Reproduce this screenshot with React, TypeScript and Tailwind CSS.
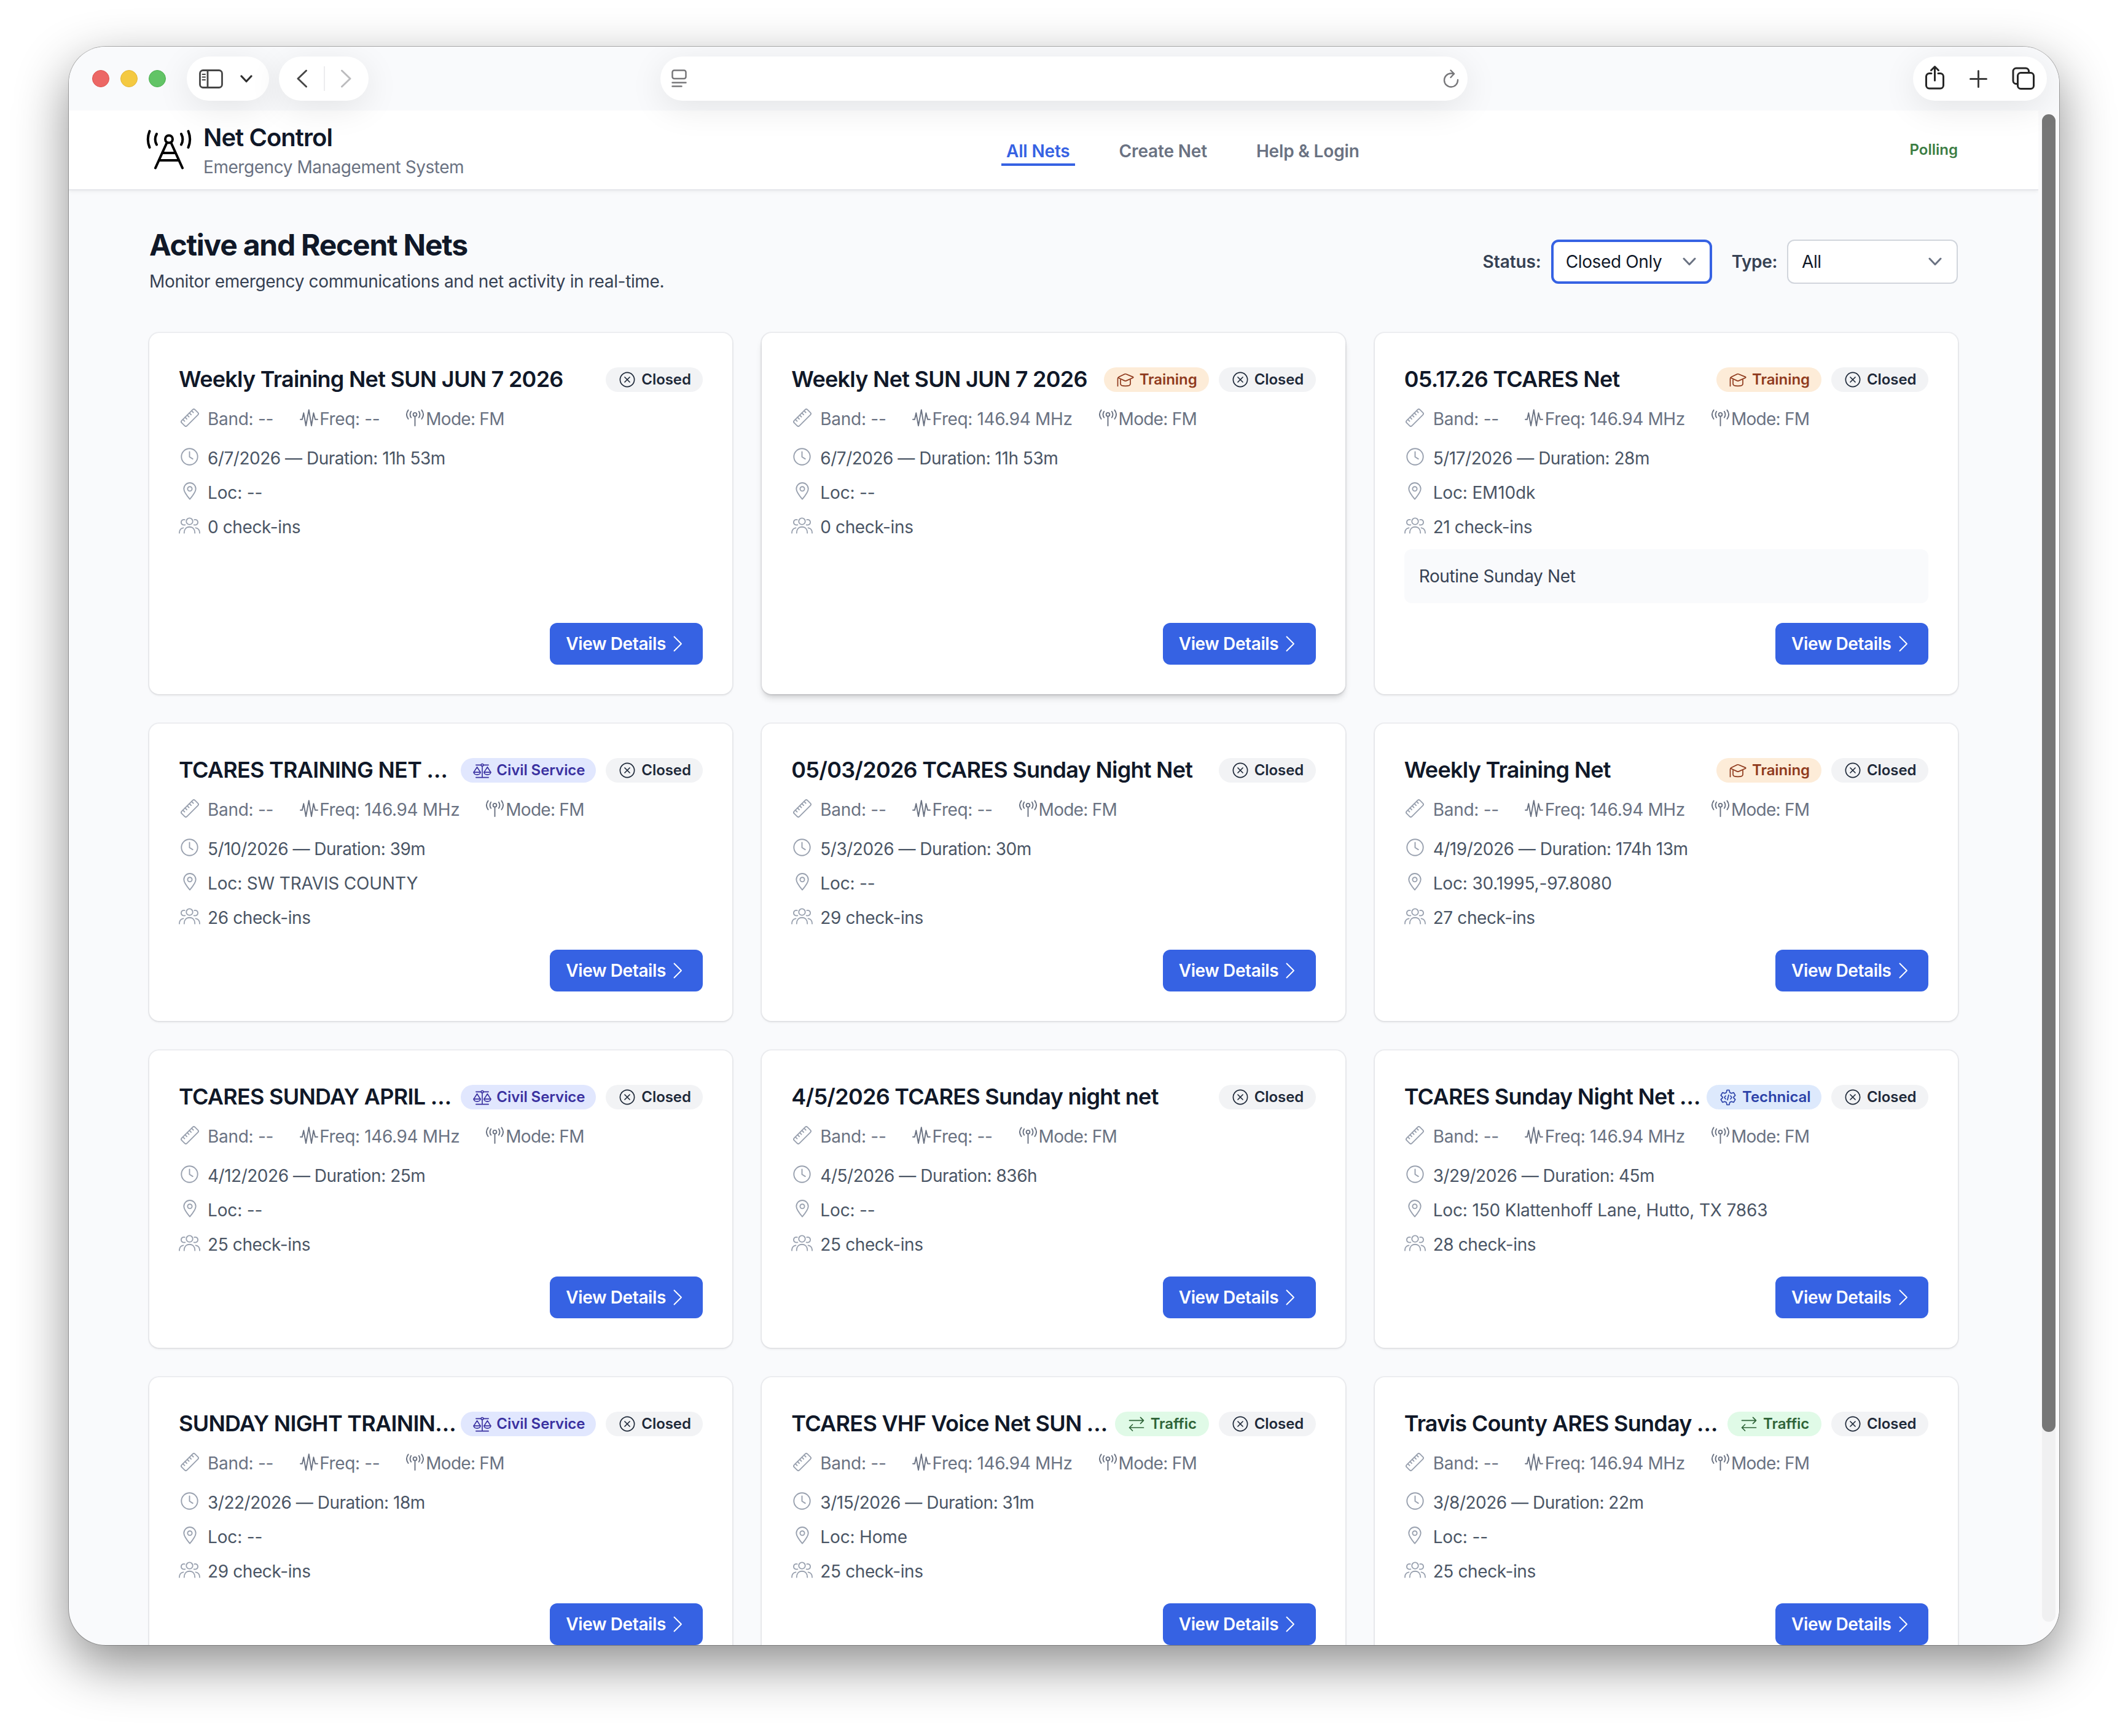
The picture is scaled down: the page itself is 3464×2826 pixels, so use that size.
import type { ReactNode } from 'react';

type NetType = 'Training' | 'Civil Service' | 'Technical' | 'Traffic';

interface Net {
  title: string;
  type?: NetType;
  freq: string;
  date: string;
  duration: string;
  loc: string;
  checkins: number;
  note?: string;
  hovered?: boolean;
}

const nets: Net[] = [
  { title: 'Weekly Training Net SUN JUN 7 2026', freq: '--', date: '6/7/2026', duration: '11h 53m', loc: '--', checkins: 0 },
  { title: 'Weekly Net SUN JUN 7 2026', type: 'Training', freq: '146.94 MHz', date: '6/7/2026', duration: '11h 53m', loc: '--', checkins: 0, hovered: true },
  { title: '05.17.26 TCARES Net', type: 'Training', freq: '146.94 MHz', date: '5/17/2026', duration: '28m', loc: 'EM10dk', checkins: 21, note: 'Routine Sunday Net' },
  { title: 'TCARES TRAINING NET …', type: 'Civil Service', freq: '146.94 MHz', date: '5/10/2026', duration: '39m', loc: 'SW TRAVIS COUNTY', checkins: 26 },
  { title: '05/03/2026 TCARES Sunday Night Net', freq: '--', date: '5/3/2026', duration: '30m', loc: '--', checkins: 29 },
  { title: 'Weekly Training Net', type: 'Training', freq: '146.94 MHz', date: '4/19/2026', duration: '174h 13m', loc: '30.1995,-97.8080', checkins: 27 },
  { title: 'TCARES SUNDAY APRIL …', type: 'Civil Service', freq: '146.94 MHz', date: '4/12/2026', duration: '25m', loc: '--', checkins: 25 },
  { title: '4/5/2026 TCARES Sunday night net', freq: '--', date: '4/5/2026', duration: '836h', loc: '--', checkins: 25 },
  { title: 'TCARES Sunday Night Net …', type: 'Technical', freq: '146.94 MHz', date: '3/29/2026', duration: '45m', loc: '150 Klattenhoff Lane, Hutto, TX 7863', checkins: 28 },
  { title: 'SUNDAY NIGHT TRAININ…', type: 'Civil Service', freq: '--', date: '3/22/2026', duration: '18m', loc: '--', checkins: 29 },
  { title: 'TCARES VHF Voice Net SUN …', type: 'Traffic', freq: '146.94 MHz', date: '3/15/2026', duration: '31m', loc: 'Home', checkins: 25 },
  { title: 'Travis County ARES Sunday …', type: 'Traffic', freq: '146.94 MHz', date: '3/8/2026', duration: '22m', loc: '--', checkins: 25 },
];

const badgeStyles: Record<NetType, string> = {
  Training: 'bg-[#fdecd8] text-[#8f3a1d] w-[171px]',
  'Civil Service': 'bg-[#e1e7fe] text-[#3a31a0] w-[220px]',
  Technical: 'bg-[#dde9fc] text-[#2b41a8] w-[187px]',
  Traffic: 'bg-[#e0fae7] text-[#2f6438] w-[153px]',
};

interface IconProps {
  w: number;
  h: number;
  stroke?: number;
  className?: string;
  children: ReactNode;
}

function Icon({ w, h, stroke = 1.9, className, children }: IconProps) {
  return (
    <svg
      width={w}
      height={h}
      viewBox={`0 0 ${w} ${h}`}
      fill="none"
      stroke="currentColor"
      strokeWidth={stroke}
      strokeLinecap="round"
      strokeLinejoin="round"
      className={className}
    >
      {children}
    </svg>
  );
}

const RulerIcon = () => (
  <Icon w={30} h={30}>
    <rect x="-0.2" y="9" width="30.4" height="12" rx="2.6" transform="rotate(-45 15 15)" />
    <path transform="rotate(-45 15 15)" d="M5 9v4M10 9v4M15 9v4M20 9v4M25 9v4" />
  </Icon>
);

const WaveIcon = () => (
  <Icon w={30} h={28}>
    <path d="M1 16.7h3l2.3-10.4L10 27 14.8 1.2 19 27l3.4-20.7L25 16.7h4" />
  </Icon>
);

const AntennaIcon = () => (
  <Icon w={29} h={28}>
    <circle cx="14.5" cy="8.8" r="2.9" />
    <path d="M14.5 12v15M8.2 3.8c-2.2 3.2-2.2 6.8 0 10M20.8 3.8c2.2 3.2 2.2 6.8 0 10M3.6 1.6c-3.4 4.6-3.4 9.8 0 14.4M25.4 1.6c3.4 4.6 3.4 9.8 0 14.4" />
  </Icon>
);

const ClockIcon = () => (
  <Icon w={29} h={29}>
    <circle cx="14.5" cy="14.5" r="13.2" />
    <path d="M14.5 6.5v8.2l5.3 3.4" />
  </Icon>
);

const PinIcon = () => (
  <Icon w={22} h={29}>
    <path d="M11 27.6C8.4 24.5 1.3 16 1.3 10.7a9.7 9.7 0 0 1 19.4 0c0 5.3-7.1 13.8-9.7 16.9Z" />
    <circle cx="11" cy="10.8" r="3.6" />
  </Icon>
);

const UsersIcon = () => (
  <Icon w={36} h={27}>
    <circle cx="18" cy="6.5" r="5.4" />
    <path d="M9 26c0-6.4 3.6-10.2 9-10.2S27 19.6 27 26M10 3.8c-3.5-.8-6 1.4-6 4.4s2.6 5 6.6 4.2M26 3.8c3.5-.8 6 1.4 6 4.4s-2.6 5-6.6 4.2M1 26c0-4.6 2.2-7.9 6.6-8.6M35 26c0-4.6-2.2-7.9-6.6-8.6" />
  </Icon>
);

const ClosedIcon = () => (
  <Icon w={26} h={26} stroke={1.7}>
    <circle cx="13" cy="13" r="11.6" />
    <path d="M9 9l8 8M17 9l-8 8" />
  </Icon>
);

const typeIcons: Record<NetType, ReactNode> = {
  Training: (
    <Icon w={28} h={23} stroke={1.7}>
      <path d="M1.5 21.5V9.5c0-1.6.8-2.4 2-2.9L12.8 2c.9-.4 1.5-.4 2.4 0l11 4.6c.8.4.8 1 0 1.4l-11 4.9c-.9.4-1.5.4-2.4 0L3.5 8.6" />
      <path d="M6 11v7c0 4.5 16 4.5 16 0v-7" />
    </Icon>
  ),
  'Civil Service': (
    <Icon w={31} h={25} stroke={1.7}>
      <circle cx="15.5" cy="3" r="1.9" />
      <path d="M15.5 5v19M5 3h8.5M17.5 3H26M5 24h21M6.8 6.5 1.2 15.2M6.8 6.5l5.6 8.7M24.2 6.5l-5.6 8.7M24.2 6.5l5.6 8.7" />
      <path d="M1.2 15.2h11.2c0 5.6-11.2 5.6-11.2 0ZM18.6 15.2h11.2c0 5.6-11.2 5.6-11.2 0Z" />
    </Icon>
  ),
  Technical: (
    <Icon w={26} h={27} stroke={1.7}>
      <path d="M11.2 1.5h3.6l1 3.9 2.4 1.4 3.9-1.2 2.6 4.5-2.7 2.7v1.4l2.7 2.7-2.6 4.5-3.9-1.2-2.4 1.4-1 3.9h-3.6l-1-3.9-2.4-1.4-3.9 1.2-2.6-4.5L4 14.2v-1.4l-2.7-2.7 2.6-4.5 3.9 1.2 2.4-1.4Z" />
      <path d="M9 11l-2 2.5L9 16M17 11l2 2.5-2 2.5M14 9.5l-2 8" />
    </Icon>
  ),
  Traffic: (
    <Icon w={26} h={24} stroke={1.7}>
      <path d="M1.5 6.3h23M19.5 1.3l5 5-5 5M24.5 18h-23M6.5 13l-5 5 5 5" />
    </Icon>
  ),
};

function Badge({ icon, label, className }: { icon: ReactNode; label: string; className: string }) {
  return (
    <span className={`flex h-10 shrink-0 items-center rounded-full pl-5 text-[24px] font-[580] whitespace-nowrap ${className}`}>
      <span className="mr-2 flex w-[30px] justify-center">{icon}</span>
      {label}
    </span>
  );
}

function InfoRow({ icon, className = '', children }: { icon: ReactNode; className?: string; children: ReactNode }) {
  return (
    <div className={`flex h-10 items-center text-[28px] text-gray-600 ${className}`}>
      <span className="mr-3 flex w-[35px] justify-center pb-[5px] text-gray-400">{icon}</span>
      {children}
    </div>
  );
}

function NetCard({ net }: { net: Net }) {
  return (
    <div
      className={`flex flex-col rounded-2xl bg-white p-12 tracking-[-0.01em] ${
        net.hovered
          ? 'shadow-[0_0_0_2px_rgba(17,24,39,0.06),0_8px_12px_-2px_rgba(0,0,0,0.14),0_4px_8px_-4px_rgba(0,0,0,0.14)]'
          : 'shadow-[0_0_0_2px_rgba(17,24,39,0.05),0_2px_4px_rgba(0,0,0,0.07)]'
      }`}
    >
      <div className="flex h-14 items-center justify-between">
        <h3 className="pb-0.5 text-[36px] font-semibold tracking-[-0.0205em] whitespace-nowrap text-gray-900">{net.title}</h3>
        <div className="flex gap-4 tracking-[-0.004em]">
          {net.type && <Badge icon={typeIcons[net.type]} label={net.type} className={badgeStyles[net.type]} />}
          <Badge icon={<ClosedIcon />} label="Closed" className="w-[158px] bg-[#f2f3f5] text-gray-800" />
        </div>
      </div>

      <div className="mt-4 flex h-10 items-center gap-10 text-[28px] whitespace-nowrap text-gray-500">
        <div className="flex items-center tracking-[-0.01em]">
          <span className="mr-3 flex w-[35px] justify-center pb-[5px] text-gray-400"><RulerIcon /></span>
          Band: --
        </div>
        <div className="flex items-center tracking-[-0.013em]">
          <span className="flex w-[35px] justify-center pb-1"><WaveIcon /></span>
          Freq: {net.freq}
        </div>
        <div className="flex items-center tracking-[-0.026em]">
          <span className="flex w-[35px] justify-center pb-1"><AntennaIcon /></span>
          Mode: FM
        </div>
      </div>

      <div className="mt-6 flex flex-col gap-4">
        <InfoRow icon={<ClockIcon />} className="tracking-[-0.0175em]">{net.date} — Duration: {net.duration}</InfoRow>
        <InfoRow icon={<PinIcon />}>Loc: {net.loc}</InfoRow>
        <InfoRow icon={<UsersIcon />} className="tracking-[-0.014em]">{net.checkins} check-ins</InfoRow>
      </div>

      {net.note && (
        <p className="mt-4 rounded-xl bg-[#f9fafc] p-6 text-[28px] leading-10 tracking-[-0.013em] text-gray-700">{net.note}</p>
      )}

      <div className="mt-auto flex justify-end pt-8">
        <button className="flex h-[68px] w-[249px] items-center rounded-xl bg-[#3662e3] pl-[26px] text-[28px] font-[580] tracking-[-0.014em] whitespace-nowrap text-white">
          View Details
          <Icon w={15} h={26} className="ml-3">
            <path d="M1.5 1.5 13 13 1.5 24.5" />
          </Icon>
        </button>
      </div>
    </div>
  );
}

function Select({ value, className }: { value: string; className: string }) {
  return (
    <button className={`flex h-[72px] items-center justify-between rounded-xl bg-white text-[28px] text-gray-900 ${className}`}>
      {value}
      <Icon w={22} h={14} stroke={3} className="text-gray-500">
        <path d="M2 2l9 9.5L20 2" />
      </Icon>
    </button>
  );
}

const pill = 'flex h-[72px] items-center rounded-full bg-white shadow-[0_12px_56px_rgba(0,0,0,0.09)]';

function Toolbar() {
  return (
    <div className="relative z-10 flex h-[104px] shrink-0 items-center bg-[#f9fafc] pl-[38px]">
      <div className="flex gap-[18px]">
        <span className="size-7 rounded-full border border-[#dd5551] bg-[#ec6765]" />
        <span className="size-7 rounded-full border border-[#e2b63a] bg-[#f4c941]" />
        <span className="size-7 rounded-full border border-[#4fb053] bg-[#62c466]" />
      </div>

      <div className={`ml-[34px] w-[134px] pl-5 text-[#454545] ${pill}`}>
        <Icon w={39} h={31} stroke={2.8}>
          <rect x="1.5" y="1.5" width="36" height="28" rx="5" />
          <path d="M14 2v27" />
          <path strokeWidth="2" d="M5.5 8h4.5M5.5 12.5h4.5M5.5 17h4.5" />
        </Icon>
        <Icon w={20} h={13} stroke={3.2} className="ml-[28px] text-[#2f2f2f]">
          <path d="M2 2l8 8.5L18 2" />
        </Icon>
      </div>

      <div className={`ml-4 w-[146px] pl-7 ${pill}`}>
        <Icon w={19} h={30} stroke={3} className="text-[#474747]">
          <path d="M16.5 2 3 15l13.5 13" />
        </Icon>
        <span className="ml-[26px] h-10 w-[2px] bg-[#ececee]" />
        <Icon w={19} h={30} stroke={3} className="ml-[25px] text-[#bcbcbe]">
          <path d="M2.5 2 16 15 2.5 28" />
        </Icon>
      </div>

      <div className={`ml-[475px] w-[1314px] justify-between pr-[14px] pl-[18px] text-[#77777a] ${pill}`}>
        <Icon w={25} h={30} stroke={2.5}>
          <rect x="1.5" y="1.5" width="22" height="13.5" rx="3" />
          <path d="M1.5 21.5h22M1.5 27.5h15" />
        </Icon>
        <Icon w={26} h={30} stroke={2.4}>
          <path d="M24 17a11 11 0 1 1-11-10.5c2 0 3.5.2 5 .8M12.5 1.5l5.5 5.5-5.5 6" />
        </Icon>
      </div>

      <div className={`ml-[725px] w-[218px] pl-5 text-[#262626] ${pill}`}>
        <Icon w={31} h={40} stroke={3} className="mb-1">
          <path d="M10 13.5H6.5a5 5 0 0 0-5 5V33a5 5 0 0 0 5 5h18a5 5 0 0 0 5-5V18.5a5 5 0 0 0-5-5H21M15.5 25V2.5M9.5 8.5l6-6 6 6" />
        </Icon>
        <Icon w={29} h={29} stroke={3} className="ml-[41px] text-[#3d3d3d]">
          <path d="M14.5 1.5v26M1.5 14.5h26" />
        </Icon>
        <Icon w={37} h={37} stroke={3} className="mb-0.5 ml-10">
          <rect x="9.5" y="9.5" width="26" height="26" rx="5" />
          <path d="M9.5 27.5H7a5 5 0 0 1-5-5V7a5 5 0 0 1 5-5h15.5a5 5 0 0 1 5 5v2.5" />
        </Icon>
      </div>
    </div>
  );
}

function Logo() {
  return (
    <Icon w={74} h={66} stroke={4} className="ml-[-5px] text-black">
      <circle cx="37" cy="15.5" r="6" />
      <path d="M33.5 21.5 15 62.5M40.5 21.5 59 62.5M26 38h22M21 50h32" />
      <path d="M17 7c-3 5.5-3 12 0 17.5M57 7c3 5.5 3 12 0 17.5M5.5 2.5c-3.5 8.5-3.5 18 0 26.5M68.5 2.5c3.5 8.5 3.5 18 0 26.5" />
    </Icon>
  );
}

function Header() {
  return (
    <header className="flex h-[130px] items-center border-b-2 border-gray-200 bg-white px-[131px] shadow-[0_2px_6px_rgba(0,0,0,0.06)]">
      <Logo />
      <div className="ml-[19px] w-[1299px]">
        <h1 className="text-[40px] leading-14 font-semibold tracking-[-0.024em] text-gray-900">Net Control</h1>
        <p className="text-[28px] leading-10 tracking-[-0.016em] text-gray-500">Emergency Management System</p>
      </div>
      <nav className="flex gap-16 pt-2 text-[28px] leading-10 font-[580] tracking-[-0.006em] text-gray-500">
        <a className="border-b-4 border-[#3662e3] px-2 text-[#3662e3]">All Nets</a>
        <a className="border-b-4 border-transparent px-2">Create Net</a>
        <a className="border-b-4 border-transparent px-2">Help &amp; Login</a>
      </nav>
      <span className="ml-auto text-[24px] font-[580] text-[#3b7d44]">Polling</span>
    </header>
  );
}

export default function App() {
  return (
    <div className="h-[2826px] w-[3464px] overflow-hidden bg-white px-[112px] pt-[76px] font-['Inter','Liberation_Sans',sans-serif] antialiased">
      <div className="flex h-[2602px] w-[3240px] flex-col overflow-hidden rounded-[60px] bg-[#f9fafc] shadow-[0_0_0_1px_rgba(0,0,0,0.28),0_32px_86px_rgba(0,0,0,0.45)]">
        <Toolbar />
        <div className="flex min-h-0 flex-1">
          <div className="w-[3206px]">
            <Header />
            <main className="px-[131px] pt-14">
              <div className="flex items-center justify-between">
                <div>
                  <h2 className="pt-px text-[48px] leading-16 font-bold tracking-[-0.026em] text-gray-900">Active and Recent Nets</h2>
                  <p className="mt-[7px] text-[28px] leading-10 tracking-[-0.0125em] text-gray-700">
                    Monitor emergency communications and net activity in real-time.
                  </p>
                </div>
                <div className="flex items-center pt-2 text-[28px] tracking-[-0.013em]">
                  <label className="mr-4 font-[580] tracking-[-0.003em] text-gray-700">Status:</label>
                  <Select value="Closed Only" className="w-[262px] border-4 border-[#3662e3] pr-[22px] pl-5" />
                  <label className="mr-4 ml-8 font-[580] text-gray-700">Type:</label>
                  <Select value="All" className="w-[278px] border-2 border-gray-300 pr-6 pl-[22px]" />
                </div>
              </div>

              <div className="mt-16 grid grid-cols-3 gap-12">
                {nets.map((net) => (
                  <NetCard key={net.title} net={net} />
                ))}
              </div>
            </main>
          </div>
          <div className="w-[34px] bg-[#fafafb] pt-[6px] pl-[6px]">
            <div className="h-[2454px] w-[22px] rounded-full bg-[#f0f0f1]">
              <div className="h-[2145px] w-[22px] rounded-full bg-[#777777]" />
            </div>
          </div>
        </div>
      </div>
    </div>
  );
}
